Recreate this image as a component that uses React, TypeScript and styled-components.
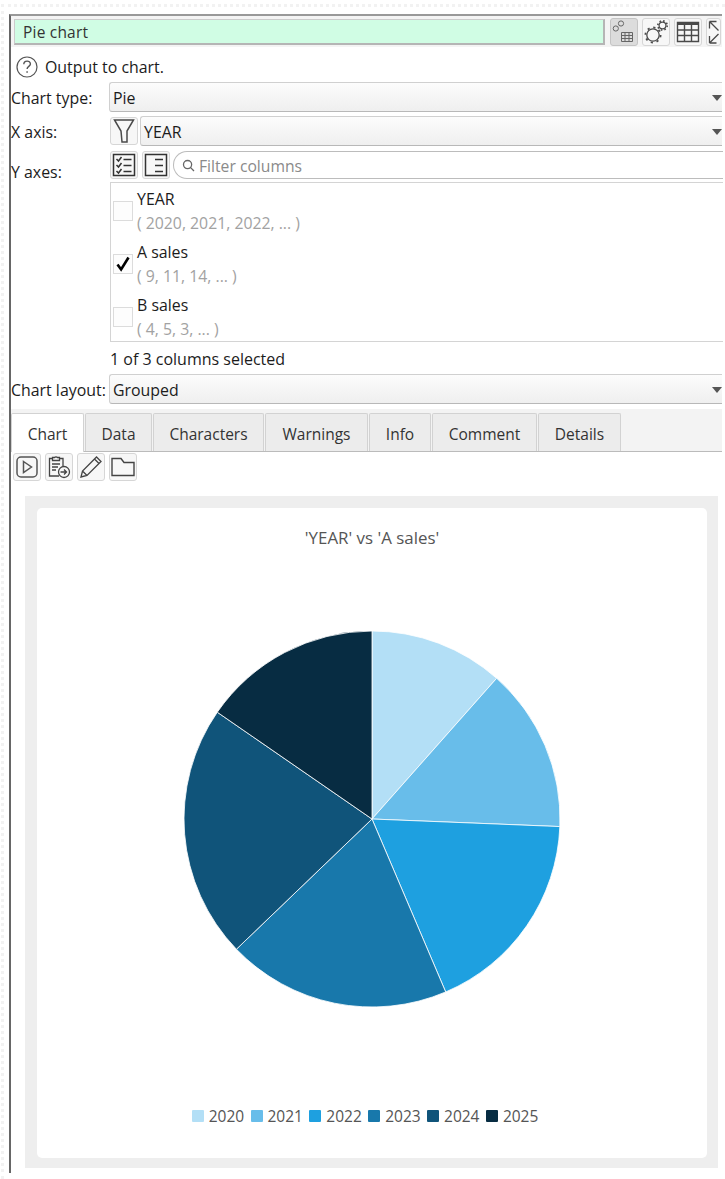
import React from 'react';
import styled, { createGlobalStyle } from 'styled-components';

const GlobalStyle = createGlobalStyle`
  html, body { margin: 0; padding: 0; background: #fff; }
  body { font-family: "Open Sans", "Noto Sans", "Liberation Sans", sans-serif; color: #1c1c1c; }
  * { box-sizing: border-box; }
`;

const Page = styled.div`
  width: 725px;
  height: 1179px;
  overflow: hidden;
  background: #fff;
  padding: 4px 0 0 1px;
`;
const TornEdge = styled.div`
  height: 100%;
  padding: 7px 0 0 5px;
  border-top: 3px dotted #f2f2f2;
  border-left: 3px dotted #f2f2f2;
`;
const Frame = styled.div`
  width: 713px;
  height: 1159px;
  border-left: 2px solid #666;
  border-top: 2px solid #999;
`;
const TitleBar = styled.div`
  display: flex;
  align-items: center;
  gap: 4px;
  height: 31px;
  padding: 1px 0 0 3px;
  background: #f4f4f4;
`;
const NameInput = styled.div`
  width: 591px;
  height: 26px;
  margin-right: 1px;
  padding-left: 8px;
  background: #d0fde4;
  border: 1px solid #ccc;
  border-right: 2px solid #b5b5b5;
  border-bottom: 2px solid #b5b5b5;
  font-size: 15.5px;
  line-height: 24px;
  color: #333;
  letter-spacing: 0.2px;
`;
const IconButton = styled.div<{ $on?: boolean; $w?: number }>`
  flex: none;
  display: flex;
  align-items: center;
  justify-content: center;
  width: ${p => p.$w ?? 28}px;
  height: 28px;
  border-radius: 3px;
  border: 1px solid ${p => (p.$on ? '#c4c4c4' : '#d6d6d6')};
  background: ${p => (p.$on ? '#dcdcdc' : '#f7f7f7')};
`;
const Form = styled.div`
  display: flex;
  flex-direction: column;
`;
const HelpRow = styled.div`
  display: flex;
  align-items: center;
  gap: 7px;
  height: 23px;
  margin: 8px 0 4px 5px;
  font-size: 15.9px;
`;
const Row = styled.div<{ $top?: number }>`
  display: flex;
  align-items: center;
  gap: 4px;
  margin-top: ${p => p.$top ?? 0}px;
  height: 30px;
`;
const Label = styled.div<{ $w?: number; $drop?: number }>`
  flex: none;
  width: ${p => p.$w ?? 99}px;
  margin-right: -4px;
  padding-top: ${p => p.$drop ?? 0}px;
  font-size: 15.9px;
  white-space: nowrap;
`;
const Combo = styled.div<{ $drop?: number; $pull?: number }>`
  flex: 1;
  height: 100%;
  display: flex;
  align-items: center;
  justify-content: space-between;
  padding: ${p => p.$drop ?? 0}px 0 0 3px;
  margin-left: ${p => -(p.$pull ?? 0)}px;
  font-size: 15.9px;
  border: 1px solid #d0d0d0;
  border-right: none;
  border-bottom-color: #b8b8b8;
  border-radius: 3px 0 0 3px;
  background: linear-gradient(#fcfcfc, #efefef);
`;
const Caret = styled.div`
  width: 0;
  height: 0;
  border-left: 5px solid transparent;
  border-right: 5px solid transparent;
  border-top: 6px solid #555;
`;
const Search = styled.div`
  flex: 1;
  height: 28px;
  display: flex;
  align-items: center;
  gap: 4px;
  padding: 1px 0 0 8px;
  margin: 0 -1px 0 -1px;
  border: 1px solid #bcbcbc;
  border-right: none;
  border-radius: 14px 0 0 14px;
  font-size: 15.7px;
  color: #8a8a8a;
`;
const ColumnList = styled.div`
  margin: 2px -1px 0 99px;
  height: 160px;
  padding-top: 1px;
  border: 1px solid #d4d4d4;
  border-right: none;
`;
const Column = styled.div`
  display: flex;
  align-items: center;
  gap: 4px;
  height: 53px;
  padding-left: 2px;
`;
const Check = styled.div`
  flex: none;
  display: flex;
  align-items: center;
  justify-content: center;
  width: 20px;
  height: 20px;
  border: 1px solid #dcdcdc;
  background: #fdfdfd;
`;
const ColumnName = styled.div`
  font-size: 15.9px;
  line-height: 24px;
`;
const ColumnValues = styled.div`
  font-size: 15.8px;
  line-height: 24px;
  color: #a2a2a2;
`;
const Status = styled.div`
  margin: 6px 0 4px 99px;
  font-size: 16px;
  line-height: 22px;
`;
const TabStrip = styled.div`
  display: flex;
  align-items: flex-end;
  height: 43px;
  margin-top: 5px;
  background: #f3f3f3;
  border-bottom: 1px solid #bbb;
`;
const Tab = styled.div<{ $active?: boolean; $w: number }>`
  flex: none;
  width: ${p => p.$w}px;
  height: ${p => (p.$active ? 39 : 38)}px;
  margin-right: 1px;
  margin-bottom: ${p => (p.$active ? -1 : 0)}px;
  padding-top: 2px;
  display: flex;
  align-items: center;
  justify-content: center;
  font-size: 15.5px;
  color: #333;
  background: ${p => (p.$active ? '#fff' : '#ececec')};
  border: 1px solid #d2d2d2;
  border-bottom: none;
  border-radius: 2px 2px 0 0;
`;
const Toolbar = styled.div`
  display: flex;
  gap: 4px;
  padding: 1px 0 0 2px;
`;
const Panel = styled.div`
  width: 693px;
  height: 672px;
  margin: 15px 0 0 14px;
  padding: 12px 11px 10px 12px;
  background: #eee;
`;
const Card = styled.div`
  height: 100%;
  display: flex;
  flex-direction: column;
  align-items: center;
  padding-top: 20px;
  background: #fff;
  border-radius: 5px;
`;
const ChartTitle = styled.div`
  font-size: 16.9px;
  line-height: 20px;
  color: #555;
`;
const PieSvg = styled.svg`
  margin-top: 81px;
  display: block;
`;
const Legend = styled.div`
  display: flex;
  gap: 6.4px;
  margin: 97px 14px 0 0;
`;
const LegendItem = styled.div`
  display: flex;
  align-items: center;
  gap: 5px;
  font-size: 15.5px;
  line-height: 20px;
  color: #555;
`;
const Swatch = styled.div<{ $c: string }>`
  width: 12px;
  height: 12px;
  border-radius: 1px;
  background: ${p => p.$c};
`;

const data = [
  { year: '2020', value: 9, color: '#b3dff6' },
  { year: '2021', value: 11, color: '#68bdea' },
  { year: '2022', value: 14, color: '#1ea0e0' },
  { year: '2023', value: 15, color: '#1878ab' },
  { year: '2024', value: 17, color: '#10547a' },
  { year: '2025', value: 12, color: '#072c42' },
];

function Pie() {
  const total = data.reduce((s, d) => s + d.value, 0);
  const c = 190;
  const r = 188;
  let a = -Math.PI / 2;
  return (
    <PieSvg width="380" height="380" viewBox="0 0 380 380">
      {data.map(d => {
        const b = a + (d.value / total) * Math.PI * 2;
        const path = `M${c} ${c}L${c + r * Math.cos(a)} ${c + r * Math.sin(a)}A${r} ${r} 0 0 1 ${c + r * Math.cos(b)} ${c + r * Math.sin(b)}Z`;
        a = b;
        return <path key={d.year} d={path} fill={d.color} stroke="#fff" strokeWidth="0.8" />;
      })}
    </PieSvg>
  );
}

const dark = '#4a4a4a';

function App() {
  return (
    <Page>
      <GlobalStyle />
      <TornEdge>
        <Frame>
          <TitleBar>
            <NameInput>Pie chart</NameInput>
            <IconButton $on>
              <svg width="24" height="24" viewBox="0 0 24 24" fill="none" stroke="#666" strokeWidth="1">
                <circle cx="9" cy="3.5" r="2.6" />
                <circle cx="3.8" cy="8.5" r="2.6" />
                <path d="M9.5 12.5h11v9h-11zM9.5 15.5h11M9.5 18.5h11M13 12.5v9M17 12.5v9" />
              </svg>
            </IconButton>
            <IconButton>
              <svg width="26" height="26" viewBox="0 0 26 26" fill="none" stroke={dark}>
                <circle cx="10" cy="16" r="6.2" strokeWidth="1.3" />
                <circle cx="10" cy="16" r="7.6" strokeWidth="1.8" strokeDasharray="2.2 3.77" />
                <circle cx="19.5" cy="6.5" r="3.4" strokeWidth="1.2" />
                <circle cx="19.5" cy="6.5" r="4.7" strokeWidth="1.6" strokeDasharray="1.6 2.1" />
              </svg>
            </IconButton>
            <IconButton>
              <svg width="24" height="22" viewBox="0 0 24 22" fill="none" stroke={dark} strokeWidth="1.4">
                <path d="M1.5 1.5h21v19h-21z" />
                <path d="M1.5 2.5h21" strokeWidth="3" />
                <path d="M1.5 9h21M1.5 14.5h21M8.5 3v17M15.5 3v17" />
              </svg>
            </IconButton>
            <IconButton $w={15}>
              <svg width="12" height="24" viewBox="0 0 12 24" fill="none" stroke={dark} strokeWidth="1.3">
                <path d="M1.5 1.5h7M1.5 1.5v7M1.5 1.5l9 9M1.5 23h7M1.5 23v-7M1.5 23l9-9" />
              </svg>
            </IconButton>
          </TitleBar>
          <Form>
            <HelpRow>
              <svg width="22" height="22" viewBox="0 0 22 22" fill="none" stroke="#555" strokeWidth="1.2">
                <circle cx="11" cy="11" r="10" />
                <path d="M7.8 8.3c0-4.2 6.6-4.2 6.6-.3 0 2.4-3.3 2.4-3.3 5" strokeWidth="1.4" />
                <path d="M11.1 15.2v1.6" strokeWidth="1.5" />
              </svg>
              Output to chart.
            </HelpRow>
            <Row>
              <Label $w={98} $drop={2}>Chart type:</Label>
              <Combo $drop={2}>Pie<Caret /></Combo>
            </Row>
            <Row $top={4}>
              <Label $drop={2}>X axis:</Label>
              <IconButton>
                <svg width="22" height="26" viewBox="0 0 22 26" fill="none" stroke={dark} strokeWidth="1.5">
                  <path d="M1.5 2h19l-6.5 11v11h-5l-1-11z" />
                </svg>
              </IconButton>
              <Combo $pull={2} $drop={2}>YEAR<Caret /></Combo>
            </Row>
            <Row $top={4}>
              <Label $drop={14}>Y axes:</Label>
              <IconButton>
                <svg width="24" height="24" viewBox="0 0 24 24" fill="none" stroke="#333" strokeWidth="1.5">
                  <path d="M1.5 1.5h21v21h-21z" />
                  <path d="M4.5 6l2 2 3-4M4.5 12l2 2 3-4M4.5 18l2 2 3-4M11.5 6.5h8M11.5 12.5h8M11.5 18.5h8" />
                </svg>
              </IconButton>
              <IconButton>
                <svg width="24" height="24" viewBox="0 0 24 24" fill="none" stroke="#333" strokeWidth="1.5">
                  <path d="M1.5 1.5h21v21h-21z" />
                  <path d="M11 6.5h8M11 12.5h8M11 18.5h8" />
                </svg>
              </IconButton>
              <Search>
                <svg width="13" height="13" viewBox="0 0 14 14" fill="none" stroke="#666" strokeWidth="1.4">
                  <circle cx="6" cy="6" r="4.4" />
                  <path d="M9.3 9.3l3.6 3.6" />
                </svg>
                Filter columns
              </Search>
            </Row>
            <ColumnList>
              <Column>
                <Check />
                <div>
                  <ColumnName>YEAR</ColumnName>
                  <ColumnValues>( 2020, 2021, 2022, ... )</ColumnValues>
                </div>
              </Column>
              <Column>
                <Check>
                  <svg width="16" height="16" viewBox="0 0 16 16" fill="none" stroke="#000" strokeWidth="2.6">
                    <path d="M2.5 8.5l3.6 5L13.5 1.5" />
                  </svg>
                </Check>
                <div>
                  <ColumnName>A sales</ColumnName>
                  <ColumnValues>( 9, 11, 14, ... )</ColumnValues>
                </div>
              </Column>
              <Column>
                <Check />
                <div>
                  <ColumnName>B sales</ColumnName>
                  <ColumnValues>( 4, 5, 3, ... )</ColumnValues>
                </div>
              </Column>
            </ColumnList>
            <Status>1 of 3 columns selected</Status>
            <Row>
              <Label $w={98} $drop={2}>Chart layout:</Label>
              <Combo $drop={2}>Grouped<Caret /></Combo>
            </Row>
          </Form>
          <TabStrip>
            <Tab $active $w={73}>Chart</Tab>
            <Tab $w={67}>Data</Tab>
            <Tab $w={111}>Characters</Tab>
            <Tab $w={103}>Warnings</Tab>
            <Tab $w={62}>Info</Tab>
            <Tab $w={105}>Comment</Tab>
            <Tab $w={83}>Details</Tab>
          </TabStrip>
          <Toolbar>
            <IconButton>
              <svg width="22" height="22" viewBox="0 0 22 22" fill="none" stroke="#555" strokeWidth="1.5">
                <rect x="1" y="1" width="20" height="20" rx="4" />
                <path d="M7.5 5.5l8 5.5-8 5.5z" />
              </svg>
            </IconButton>
            <IconButton>
              <svg width="24" height="24" viewBox="0 0 24 24" fill="none" stroke="#444" strokeWidth="1.3">
                <path d="M12 21H2.5V3.5h3M13 3.5h3V11M5.5 2.5h2a2 2 0 0 1 3 0h2v3h-7zM5 9h8M5 12h6M5 15h4" />
                <circle cx="17" cy="17" r="5.5" />
                <path d="M13.5 17h6M17 14.5l2.5 2.5-2.5 2.5" />
              </svg>
            </IconButton>
            <IconButton>
              <svg width="24" height="24" viewBox="0 0 24 24" fill="none" stroke="#444" strokeWidth="1.3">
                <path d="M2 22l1.5-6L17.5 2l4.5 4.5L8 20.5zM3.5 16L8 20.5M15.5 4l4.5 4.5" />
              </svg>
            </IconButton>
            <IconButton>
              <svg width="24" height="20" viewBox="0 0 24 20" fill="none" stroke="#444" strokeWidth="1.4">
                <path d="M1 1.5h9l3 4h10v13H1z" />
              </svg>
            </IconButton>
          </Toolbar>
          <Panel>
            <Card>
              <ChartTitle>'YEAR' vs 'A sales'</ChartTitle>
              <Pie />
              <Legend>
                {data.map(d => (
                  <LegendItem key={d.year}>
                    <Swatch $c={d.color} />
                    {d.year}
                  </LegendItem>
                ))}
              </Legend>
            </Card>
          </Panel>
        </Frame>
      </TornEdge>
    </Page>
  );
}

export default App;
